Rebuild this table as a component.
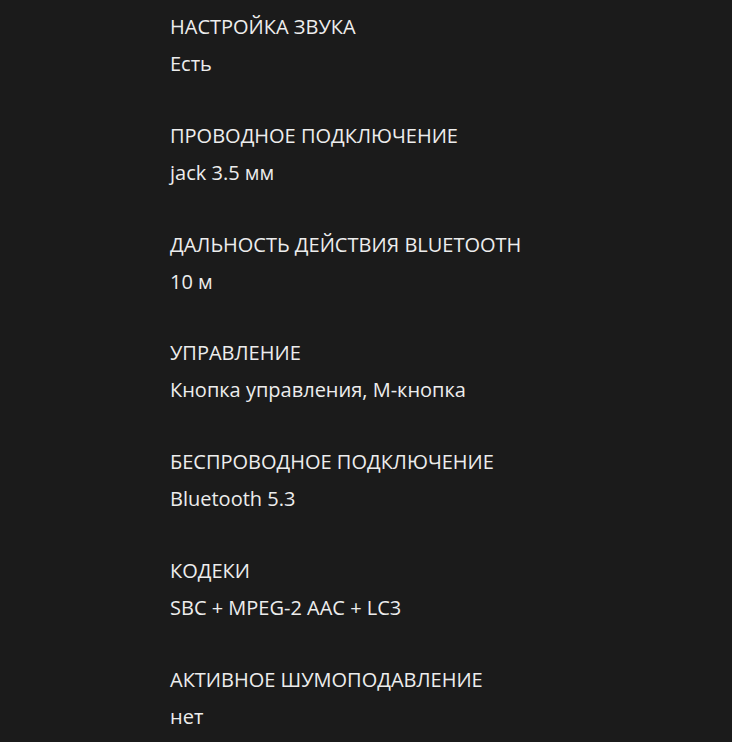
import React from 'react';

const specs = [
    { label: 'Настройка звука', value: 'Есть' },
    { label: 'Проводное подключение', value: 'jack 3.5 мм' },
    { label: 'Дальность действия Bluetooth', value: '10 м' },
    { label: 'Управление', value: 'Кнопка управления, M-кнопка' },
    { label: 'Беспроводное подключение', value: 'Bluetooth 5.3' },
    { label: 'Кодеки', value: 'SBC + MPEG-2 AAC + LC3' },
    { label: 'Активное шумоподавление', value: 'нет' },
];

const App = () => {
    return (
        <div
            className="w-full min-h-screen bg-[#1b1b1b] text-[#ededed] pl-[170px] pt-[9px]"
            style={{ fontFamily: '"Open Sans", "Noto Sans", sans-serif' }}
        >
            {specs.map((item) => (
                <div key={item.label} className="mb-[35.8px]">
                    <div className="text-[20px] leading-[36px] uppercase">{item.label}</div>
                    <div className="text-[20px] leading-[36px] mt-[1px]">{item.value}</div>
                </div>
            ))}
        </div>
    );
};

export default App;
